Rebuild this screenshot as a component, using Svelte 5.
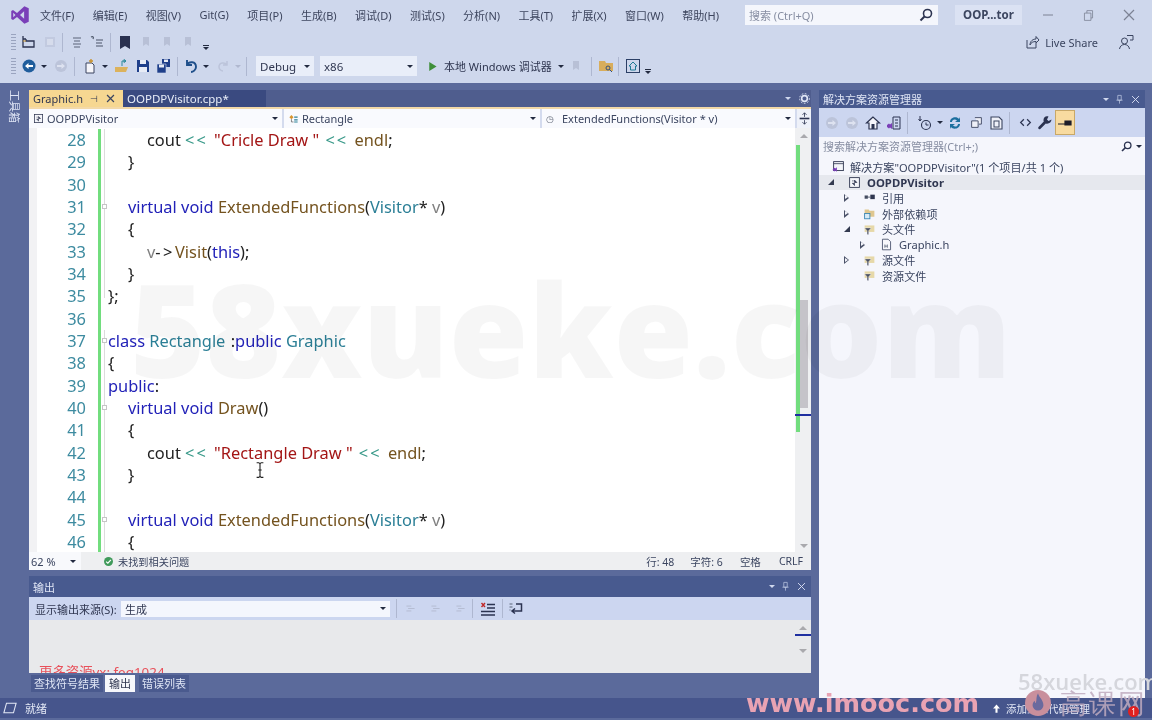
<script>
  const S = 'stroke-width="1.3" fill="none"';
  const icons = {
    vs: '<path d="M11.5 1 15 2.6v10.8L11.5 15 5.6 9.6 2.4 12 1 11.2V4.8L2.4 4l3.2 2.4zM2.6 6.2v3.6L4.4 8zM11.3 5 8 8l3.3 3z" fill="#7a3fb8"/>',
    sol: `<path d="M2 2v3h3M2 5v8h11V7H5V5" stroke="#2b3350" ${S}/><path d="M2 7h3" stroke="#c8932f" stroke-width="1"/>`,
    disA: '<rect x="3" y="3" width="10" height="10" fill="#c2cae0"/><rect x="5" y="5" width="6" height="6" fill="#d6dcec"/>',
    lines: '<path d="M4 4h8M5 7h6M4 10h8M5 13h6" stroke="#5a6478" stroke-width="1.2"/>',
    lines2: '<path d="M2 3c2-1 3 0 2 2M7 6h7M7 9h6M7 12h7" stroke="#4b5568" stroke-width="1.2" fill="none"/>',
    book: '<path d="M3 2h10v13l-5-3-5 3z" fill="#2a3150"/>',
    dbook: '<path d="M5 3h6v9l-3-2-3 2z" fill="#b8c0d6"/>',
    back: '<circle cx="8" cy="8" r="6.5" fill="#1f5d9c"/><path d="M4 8l3.5-3v2h4.5v2H7.5v2z" fill="#fff"/>',
    fwd: '<circle cx="8" cy="8" r="6" fill="#bcc4da"/><path d="M12 8 8.500 5v2H4v2h4.500v2z" fill="#dde2f0"/>',
    nw: '<path d="M4 5h6l2 2v8H4z" fill="#f5f5fa" stroke="#3b4560"/><path d="M9 1v4M7 3h4" stroke="#c8932f" stroke-width="1.4"/>',
    open: '<path d="M1 9h13l-2 5H1z" fill="#dcb25c"/><path d="M8 8V3h4M12 3l-2-1.500v3z" stroke="#2b8a9a" fill="none"/>',
    save: '<path d="M2 2h10l2 2v10H2z" fill="#1f3f8a"/><rect x="5" y="2" width="6" height="4" fill="#e8ecf6"/><rect x="4" y="9" width="8" height="5" fill="#e8ecf6"/>',
    saveall: '<path d="M6 1h8v8H6z" fill="#1f3f8a"/><path d="M1 6h9v9H1z" fill="#1f3f8a" stroke="#d0d8ec" stroke-width=".6"/><rect x="3" y="6.500" width="5" height="3" fill="#e8ecf6"/><rect x="8" y="1.500" width="4" height="2.500" fill="#e8ecf6"/>',
    undo: `<path d="M4 2v5h5M4 7c2-4 9-4 9 2 0 3-3 5-5 5" stroke="#1f4f8a" stroke-width="1.9" fill="none"/>`,
    redo: `<path d="M12 3v4H8M12 7c-2-3-8-3-8 2 0 2 2 4 4 4" stroke="#bcc4da" stroke-width="1.5" fill="none"/>`,
    play: '<path d="M4 2.500 13 8l-9 5.500z" fill="#3f8f3a"/>',
    fold: '<path d="M1 3h6l1 2h7v8H1z" fill="#d8ad5c"/><circle cx="10" cy="10" r="2" fill="none" stroke="#35507a"/><path d="M11.500 11.500 14 14" stroke="#35507a"/>',
    house: '<rect x="1.500" y="1.500" width="13" height="13" fill="none" stroke="#2b3f66"/><path d="M8 4 4 8h1.500v4h5V8H12z" fill="none" stroke="#1f7a96"/>',
    home: '<path d="M8 2 1.500 8H4v6h8V8h2.500z" fill="#f5f6fb" stroke="#2b3350" stroke-width="1.200"/><rect x="6.500" y="9" width="3" height="5" fill="#2b3350"/>',
    vsdoc: '<path d="M7 2h7v12H7z" fill="none" stroke="#2b3350"/><path d="M9 5h3M9 8h3M9 11h3" stroke="#2b3350"/><path d="M1 10l2-1.500 1 1 2-1.500v6l-2-1.500-1 1-2-1.500z" fill="#7a3fb8"/>',
    clock: '<circle cx="9" cy="10" r="4.500" fill="none" stroke="#2b3350" stroke-width="1.100"/><path d="M9 7.500V10h2.500" stroke="#2b3350" fill="none"/><path d="M3 1v5M1.500 4 3 6 4.500 4" stroke="#2b3350" fill="none"/>',
    sync: '<path d="M3 7c0-5 7-6 9-3l1-2v5H8l2-1.500C8 3.500 5 4.500 5 7zM13 9c0 5-7 6-9 3l-1 2V9h5l-2 1.500c2 2 5 1 5-1.500z" fill="#1c6f9e"/>',
    cop: '<path d="M6 2h8v8h-3M2 6h8v8H2z" fill="#eef0f8" stroke="#3b4560" stroke-width="1.100"/>',
    cop2: '<path d="M3 2h8l3 3v9H3z" fill="#eef0f8" stroke="#3b4560" stroke-width="1.100"/><rect x="6" y="6" width="5" height="6" fill="none" stroke="#3b4560"/>',
    code: '<path d="M6 4 2 8l4 4M10 4l4 4-4 4" fill="none" stroke="#2b3350" stroke-width="1.500"/>',
    wrench: '<path d="M14.500 4.500 11.500 6 10 4.500 11.500 1.500C9 .5 6.500 2 6.500 5c0 .5 0 1 .3 1.500L1.500 12c-1 1 .5 3 1.800 2l5.500-5.500c3 1 5.700-1.500 5.700-4z" fill="#2b3350"/>',
    pin: '<path d="M1 9h7M8 6h6v4H8z" stroke="#1e1e2a" fill="#1e1e2a" stroke-width="1.200"/>',
    search: '<circle cx="9.500" cy="6.500" r="4" fill="none" stroke="#2b3350" stroke-width="1.600"/><path d="M6.500 9.500 2.500 13.500" stroke="#2b3350" stroke-width="2"/>',
    soln: '<rect x="2" y="2" width="12" height="11" fill="#f4f5fa" stroke="#2f3650" stroke-width="1.100"/><path d="M2 4.500h12" stroke="#2f3650"/><path d="M1 11l2-1.500 1 1 2-1.500v5.500l-2-1.500-1 1-2-1.500z" fill="#7a3fb8"/>',
    proj: '<rect x="2" y="2" width="12" height="12" fill="#f4f5fa" stroke="#2f3650" stroke-width="1.100"/><path d="M5 9h3v3M8 5l3 3H8zM5 6h2" stroke="#2f3650" fill="#2f3650" stroke-width=".8"/>',
    cls: '<path d="M2 6l3-3 3 3-3 3z" fill="#d8952f"/><path d="M9 6h5M9 10h5M9 13h5" stroke="#2b7f96" stroke-width="1.500"/><path d="M5 9v4h3" stroke="#555" fill="none"/>',
    refs: '<rect x="2" y="5.500" width="4" height="4" fill="#444c60"/><rect x="9" y="4.500" width="5.500" height="5.500" fill="#2f3650"/><path d="M6 7.500h3" stroke="#444c60"/>',
    ext: '<path d="M2 3h5l1 1.500h6V12H2z" fill="#dfc78f"/><rect x="2" y="8" width="6.500" height="6.500" fill="#d7eaf6" stroke="#2b7fb0"/>',
    filt: '<path d="M2 3h12v8H2z" fill="#e6d8a8"/><path d="M2 6h8L7 9.500V14H5V9.500z" fill="#4a5060" stroke="#f5f6fc" stroke-width=".5"/>',
    file: '<path d="M3 1.500h7l3 3v10H3z" fill="#f8f8fc" stroke="#3b4560"/><path d="M6 8v4M9 8v4M6 10h3" stroke="#5a6478"/>',
    check: '<circle cx="8" cy="8" r="6.500" fill="#3f9a5a"/><path d="M4.500 8.200 7 10.500l4.500-5" stroke="#fff" stroke-width="1.700" fill="none"/>',
    clear: '<path d="M7 3.500h8M7 7h8M1 10.500h14M1 14h14" stroke="#2b3350" stroke-width="1.400"/><path d="M1.500 2l3.500 4M5 2 1.500 6" stroke="#c02828" stroke-width="1.400"/>',
    wrap: '<path d="M8 3h5.500v7H5M7 7.500 4 10l3 2.500" stroke="#2b3350" stroke-width="1.500" fill="none"/><path d="M1.500 3h3M1.500 6h3M1.500 9h1" stroke="#5a6478"/>',
    dline: '<path d="M3 5h6M5 8h8M3 11h6" stroke="#b4bcd2" stroke-width="1.200"/>',
    split: '<path d="M2 8h12" stroke="#2b3350" stroke-width="2"/><path d="M8 1v5M8 10v5M5.500 3.500 8 1l2.500 2.500M5.500 12.500 8 15l2.500-2.500" stroke="#2b3350" fill="none"/>',
    gear: '<circle cx="8" cy="8" r="3.500" fill="none" stroke="#dfe5f5" stroke-width="2"/><circle cx="8" cy="8" r="6" fill="none" stroke="#dfe5f5" stroke-width="1.200" stroke-dasharray="2 2"/>',
    wpin: '<path d="M5.500 2h5v7h-5zM3.500 9h9M8 9v5" stroke="#c5cfe8" fill="none"/>',
    wx: '<path d="M3 3l10 10M13 3 3 13" stroke="#d5dcf0" stroke-width="1.400"/>',
    tx: '<path d="M3 3l10 10M13 3 3 13" stroke="#7c8294" stroke-width="1.200"/>',
    tabx: '<path d="M3 3l10 10M13 3 3 13" stroke="#3b4560" stroke-width="1.800"/>',
    share: '<path d="M3 6v8h9V9" stroke="#3b4560" fill="none"/><path d="M6 11c0-4 3-6 6-6V2.500L15 6l-3 3V7.500c-3 0-5 1-6 3.500z" fill="none" stroke="#3b4560"/>',
    person: '<circle cx="6.500" cy="7" r="3" fill="none" stroke="#3b4560"/><path d="M1.500 15c.500-3 2.500-4.500 5-4.500s4.500 1.500 5 4.500M9 1.500h6V6h-3" fill="none" stroke="#3b4560"/>',
    minw: '<path d="M3 8h10" stroke="#7c8294"/>',
    rest: '<path d="M3 5h8v9H3zM6 5V2h7v9h-2" fill="none" stroke="#7c8294"/>',
    beam: '<path d="M5 1.500h2l1 1 1-1h2M5 14.500h2l1-1 1 1h2M8 2.500v11M6.500 8h3" fill="none" stroke="#222"/>',
    status: '<path d="M4 2.500h11L12 13.500H1z" fill="none" stroke="#e4e9f6" stroke-width="1.200"/>',
    up: '<path d="M8 2 3 8h3.500v6h3V8H13z" fill="#fff"/>'
  };

  const K = 'k', T = 't', F = 'f', R = 's', O = 'o', V = 'v', P = 'p', A = 'ar', C = 'cl';
  const rows = [
    { n: 28, fold: 'l', ind: 2, c: [[P, 'cout '], [O, '<< '], [R, '"Cricle Draw "'], [O, ' << '], [F, 'endl'], [P, ';']] },
    { n: 29, fold: 'l', ind: 1, c: [[P, '}']] },
    { n: 30, fold: 'l', ind: 0, c: [] },
    { n: 31, fold: 'b', ind: 1, c: [[K, 'virtual void '], [F, 'ExtendedFunctions'], [P, '('], [T, 'Visitor'], [P, '* '], [V, 'v'], [P, ')']] },
    { n: 32, fold: 'l', ind: 1, c: [[P, '{']] },
    { n: 33, fold: 'l', ind: 2, c: [[V, 'v'], [A, '->'], [F, 'Visit'], [P, '('], [K, 'this'], [P, ');']] },
    { n: 34, fold: 'l', ind: 1, c: [[P, '}']] },
    { n: 35, fold: 'e', ind: 0, c: [[P, '};']] },
    { n: 36, fold: '', ind: 0, c: [] },
    { n: 37, fold: 'b', ind: 0, c: [[K, 'class '], [T, 'Rectangle '], [C, ':'], [K, 'public '], [T, 'Graphic']] },
    { n: 38, fold: 'l', ind: 0, c: [[P, '{']] },
    { n: 39, fold: 'l', ind: 0, c: [[K, 'public'], [P, ':']] },
    { n: 40, fold: 'b', ind: 1, c: [[K, 'virtual void '], [F, 'Draw'], [P, '()']] },
    { n: 41, fold: 'l', ind: 1, c: [[P, '{']] },
    { n: 42, fold: 'l', ind: 2, c: [[P, 'cout '], [O, '<< '], [R, '"Rectangle Draw "'], [O, ' << '], [F, 'endl'], [P, ';']] },
    { n: 43, fold: 'l', ind: 1, c: [[P, '}']] },
    { n: 44, fold: 'l', ind: 0, c: [] },
    { n: 45, fold: 'b', ind: 1, c: [[K, 'virtual void '], [F, 'ExtendedFunctions'], [P, '('], [T, 'Visitor'], [P, '* '], [V, 'v'], [P, ')']] },
    { n: 46, fold: 'l', ind: 1, c: [[P, '{']] }
  ];
  const menu = ['文件(F)', '编辑(E)', '视图(V)', 'Git(G)', '项目(P)', '生成(B)', '调试(D)', '测试(S)', '分析(N)', '工具(T)', '扩展(X)', '窗口(W)', '帮助(H)'];
  const tree = [
    { cls: 'l0', ar: '', ic: 'soln', t: '解决方案"OOPDPVisitor"(1 个项目/共 1 个)' },
    { cls: 'l1 root', ar: 'open', ic: 'proj', t: 'OOPDPVisitor' },
    { cls: 'l2', ar: 'shut', ic: 'refs', t: '引用' },
    { cls: 'l2', ar: 'shut', ic: 'ext', t: '外部依赖项' },
    { cls: 'l2', ar: 'open', ic: 'filt', t: '头文件' },
    { cls: 'l3', ar: 'shut', ic: 'file', t: 'Graphic.h' },
    { cls: 'l2', ar: 'shut', ic: 'filt', t: '源文件' },
    { cls: 'l2', ar: '', ic: 'filt', t: '资源文件' }
  ];
</script>

{#snippet ic(name, cls = '')}
  <svg class="ic {cls}" viewBox="0 0 16 16" aria-hidden="true">{@html icons[name]}</svg>
{/snippet}
{#snippet dd(cls = '')}<span class="dd {cls}"></span>{/snippet}

<div class="page">
  <header class="chrome">
    <div class="menurow">
      <span class="logo">{@render ic('vs', 'big')}</span>
      <nav class="menu">
        {#each menu as m}<span>{m}</span>{/each}
      </nav>
      <div class="qsearch"><span>搜索 (Ctrl+Q)</span>{@render ic('search')}</div>
      <div class="sln">OOP...tor</div>
      <div class="win">{@render ic('minw')}{@render ic('rest', 'small')}{@render ic('tx')}</div>
    </div>
    <div class="tb one">
      <span class="grip"></span>
      <span class="c">{@render ic('sol')}</span>
      <span class="c m0">{@render ic('disA')}</span>
      <span class="sep s2"></span>
      <span class="c m3">{@render ic('lines')}</span>
      <span class="c">{@render ic('lines2')}</span>
      <span class="sep"></span>
      <span class="c m3">{@render ic('book')}</span>
      <span class="c m0">{@render ic('dbook')}</span>
      <span class="c m0">{@render ic('dbook')}</span>
      <span class="c m0">{@render ic('dbook')}</span>
      <span class="over o5"></span>
      <div class="live">{@render ic('share')}<span>Live Share</span>{@render ic('person', 'pers')}</div>
    </div>
    <div class="tb two">
      <span class="grip"></span>
      <span class="c">{@render ic('back')}</span>{@render dd('d')}
      <span class="c m1">{@render ic('fwd')}</span>
      <span class="sep"></span>
      <span class="c m4">{@render ic('nw')}</span>{@render dd('d')}
      <span class="c m1">{@render ic('open')}</span>
      <span class="c m0">{@render ic('save')}</span>
      <span class="c m0">{@render ic('saveall')}</span>
      <span class="sep"></span>
      <span class="c m2">{@render ic('undo')}</span>{@render dd('d')}
      <span class="c m1">{@render ic('redo')}</span>{@render dd('d dis')}
      <span class="sep"></span>
      <div class="combo debug"><span>Debug</span>{@render dd()}</div>
      <div class="combo x86"><span>x86</span>{@render dd()}</div>
      <span class="c m5">{@render ic('play', 'small')}</span>
      <span class="run">本地 Windows 调试器</span>{@render dd('d')}
      <span class="c">{@render ic('dbook')}</span>
      <span class="sep s5"></span>
      <span class="c m3">{@render ic('fold')}</span>
      <span class="sep s2"></span>
      <span class="c m3">{@render ic('house')}</span>
      <span class="over"></span>
    </div>
  </header>

  <main class="work">
    <aside class="toolbox"><span>工具箱</span></aside>

    <section class="center">
      <div class="tabs">
        <div class="tab on"><span>Graphic.h</span><i class="pn">⊣</i>{@render ic('tabx', 'tiny')}</div>
        <div class="tab off">OOPDPVisitor.cpp*</div>
        <div class="tabtools">{@render dd('w')}{@render ic('gear', 'small')}</div>
      </div>
      <div class="goldline"></div>
      <div class="nav">
        <div class="navc a">{@render ic('proj', 'tiny')}<span class="lbl">OOPDPVisitor</span>{@render dd()}</div>
        <div class="navc b">{@render ic('cls', 'tiny')}<span class="lbl">Rectangle</span>{@render dd()}</div>
        <div class="navc c3"><i class="clk">◷</i><span class="lbl">ExtendedFunctions(Visitor * v)</span>{@render dd()}</div>
        <div class="splitbtn">{@render ic('split', 'small')}</div>
      </div>
      <div class="editor">
        <div class="code">
          {#each rows as r}
            <div class="row">
              <span class="num">{r.n}</span>
              <span class="bar"></span>
              <span class="foldc {r.fold}"></span>
              <span class="src i{r.ind}">{#each r.c as tk}<span class={tk[0]}>{tk[1]}</span>{/each}</span>
            </div>
          {/each}
          {@render ic('beam', 'beam')}
        </div>
        <div class="scroll">
          <span class="up"></span>
          <span class="changes"></span>
          <span class="thumb"></span>
          <span class="mark"></span>
          <span class="down"></span>
        </div>
      </div>
      <div class="edstatus">
        <div class="zoom"><span>62 %</span>{@render dd()}</div>
        {@render ic('check', 'chk')}
        <span class="problems">未找到相关问题</span>
        <div class="pos"><span class="p1">行: 48</span><span class="p2">字符: 6</span><span class="p3">空格</span><span class="p4">CRLF</span></div>
      </div>

      <div class="output">
        <div class="otitle"><span>输出</span><div class="wt">{@render dd('w')}{@render ic('wpin', 'tiny')}{@render ic('wx', 'tiny')}</div></div>
        <div class="otools">
          <span class="olabel">显示输出来源(S):</span>
          <div class="ocombo"><span>生成</span>{@render dd()}</div>
          <span class="sep"></span>
          <span class="c g5">{@render ic('dline', 'small')}</span>
          <span class="c g9">{@render ic('dline', 'small')}</span>
          <span class="c g9">{@render ic('dline', 'small')}</span>
          <span class="sep s4"></span>
          <span class="c g7">{@render ic('clear')}</span>
          <span class="sep"></span>
          <span class="c g5">{@render ic('wrap')}</span>
        </div>
        <div class="obody">
          <span class="redmark">更多资源vx: feq1024</span>
          <div class="oscroll"><span class="up"></span><span class="mark"></span><span class="down"></span></div>
        </div>
        <div class="otabs">
          <span class="ot">查找符号结果</span>
          <span class="ot act">输出</span>
          <span class="ot">错误列表</span>
        </div>
      </div>
    </section>

    <aside class="side">
      <div class="stitle"><span>解决方案资源管理器</span><div class="wt">{@render dd('w')}{@render ic('wpin', 'tiny')}{@render ic('wx', 'tiny')}</div></div>
      <div class="stools">
        <span class="c">{@render ic('fwd')}</span>
        <span class="c">{@render ic('fwd')}</span>
        <span class="c m0">{@render ic('home')}</span>
        <span class="c m0">{@render ic('vsdoc')}</span>
        <span class="sep"></span>
        <span class="c g7">{@render ic('clock')}</span>{@render dd('d')}
        <span class="c">{@render ic('sync')}</span>
        <span class="c m0">{@render ic('cop', 'small')}</span>
        <span class="c">{@render ic('cop2')}</span>
        <span class="sep"></span>
        <span class="c m4">{@render ic('code', 'small')}</span>
        <span class="c">{@render ic('wrench')}</span>
        <span class="goldbtn">{@render ic('pin')}</span>
      </div>
      <div class="ssearch"><span class="lbl">搜索解决方案资源管理器(Ctrl+;)</span>{@render ic('search', 'small')}{@render dd()}</div>
      <div class="tree">
        {#each tree as n}
          <div class="node {n.cls}">
            <span class="arrow {n.ar}"></span>
            {@render ic(n.ic, 'tn')}
            <span>{n.t}</span>
          </div>
        {/each}
      </div>
    </aside>
  </main>

  <footer class="status">
    {@render ic('status', 'stic')}
    <span class="ready">就绪</span>
    <div class="stright">
      {@render ic('up', 'upi')}
      <span>添加到源代码管理</span>
    </div>
  </footer>

  <div class="wm big">58xueke.com</div>
  <div class="wm site">58xueke.com</div>
  <div class="wm imooc">www.imooc.com</div>
  <div class="wm gao">
    <svg class="flame" viewBox="0 0 24 24" aria-hidden="true"><circle cx="12" cy="12" r="12" fill="#c98f9c"/><path d="M12 3c1 4 5 6 5 11a5 5 0 0 1-10 0c0-2 1-3 2-4 0 2 1 2 1 2 1-3 0-6 2-9z" fill="#6a6a9e"/></svg>
    <span>高课网</span>
    <i class="reddot">1</i>
  </div>
</div>

<style>
  :global(body) { margin: 0; background: #cfd8ec; }
  .page {
    position: relative; width: 1152px; height: 720px; overflow: hidden;
    display: flex; flex-direction: column; background: #5b6a9b; filter: blur(.35px);
    font-family: "Noto Sans", "Noto Sans CJK SC", sans-serif; font-size: 11px; color: #2f3650;
  }
  .chrome { height: 83px; flex: none; background: #ced7ec; display: flex; flex-direction: column; }
  .menurow { height: 30px; display: flex; align-items: center; flex: none; }
  .logo { width: 40px; display: flex; justify-content: center; }
  .menu { display: flex; gap: 18.4px; width: 705px; white-space: nowrap; color: #3d455e; }
  .qsearch {
    width: 193px; height: 20px; background: #f4f6fc; display: flex; align-items: center;
    justify-content: space-between; padding: 0 4px; box-sizing: border-box; color: #878ea2; font-size: 11px;
  }
  .sln { margin-left: 17px; width: 67px; height: 20px; line-height: 20px; text-align: center; background: #dbe2f3; font-weight: 700; color: #3c4660; font-size: 11.5px; }
  .win { margin-left: 18px; display: flex; gap: 26px; align-items: center; }
  .ic { width: 16px; height: 16px; display: block; flex: none; }
  .ic.big { width: 20px; height: 20px; }
  .ic.small { width: 13px; height: 13px; }
  .ic.tiny { width: 11px; height: 11px; }
  .tb { display: flex; align-items: center; flex: none; }
  .one { height: 24px; }
  .two { height: 24px; }
  .grip { width: 5px; height: 17px; margin: 0 3px 0 11px; background: repeating-linear-gradient(#9aa4bf 0 1px, transparent 1px 3px); }
  .c { width: 20px; height: 20px; display: flex; align-items: center; justify-content: center; flex: none; }
  .m0 { margin-left: 1px; } .m1 { margin-left: 2px; } .m2 { margin-left: 3px; }
  .m3 { margin-left: 4px; } .m4 { margin-left: 5px; } .m5 { margin-left: 5px; }
  .sep { width: 1px; height: 19px; margin-left: 3px; background: #aeb7d0; flex: none; }
  .sep.s2 { margin-left: 2px; }
  .sep.s4 { margin-left: 4px; }
  .sep.s5 { margin-left: 5px; }
  .dd { width: 0; height: 0; border: 3px solid transparent; border-top: 3.5px solid #222a40; border-bottom: 0; flex: none; display: block; }
  .dd.d { margin: 0 2px; }
  .dd.dis { border-top-color: #b0b8cf; }
  .dd.w { border-top-color: #d0d8ee; }
  .over { width: 6px; height: 3px; border-top: 1px solid #222a40; margin: 10px 0 0 2px; position: relative; }
  .over.o5 { margin-left: 5px; }
  .over::after { content: ""; position: absolute; left: 0; top: 1px; border: 3px solid transparent; border-top: 3px solid #222a40; border-bottom: 0; }
  .live { margin-left: auto; display: flex; align-items: center; gap: 5px; padding-right: 18px; font-size: 11px; color: #3b4560; }
  .pers { margin-left: 15px; }
  .combo { height: 20px; background: #e9eef9; display: flex; align-items: center; justify-content: space-between; padding: 0 4px; box-sizing: border-box; font-size: 11.5px; margin-left: 6px; }
  .debug { width: 58px; margin-left: 9px; }
  .x86 { width: 97px; }
  .run { margin-left: 2px; margin-right: 2px; width: 110px; white-space: nowrap; }

  .work { flex: 1; display: flex; min-height: 0; padding-top: 7px; }
  .toolbox { width: 29px; flex: none; color: #dfe5f5; font-size: 11px; display: flex; justify-content: center; }
  .toolbox span { writing-mode: vertical-rl; text-orientation: sideways; height: 34px; }
  .center { width: 782px; flex: none; display: flex; flex-direction: column; }
  .tabs { height: 17px; display: flex; background: #4f5d8e; flex: none; color: #e8edf8; font-size: 11.5px; }
  .tab { height: 17px; display: flex; align-items: center; box-sizing: border-box; padding-left: 4px; white-space: nowrap; }
  .tab.on { width: 94px; background: #f6d791; color: #2f3650; gap: 7px; font-size: 11px; }
  .pn { font-style: normal; font-size: 9px; }
  .tab.off { width: 143px; background: #3a4a80; }
  .tabtools { margin-left: auto; display: flex; align-items: center; gap: 7px; }
  .goldline { height: 2px; background: #f3d9a8; flex: none; }
  .nav { height: 19px; display: flex; background: #d4dbee; flex: none; gap: 2px; font-size: 11px; }
  .navc { background: #f9fafe; display: flex; align-items: center; gap: 3px; padding: 0 4px; box-sizing: border-box; color: #3b4560; }
  .lbl { flex: 1; white-space: nowrap; }
  .a { width: 253px; } .b { width: 256px; } .c3 { width: 253px; }
  .clk { font-style: normal; color: #6b7280; font-size: 9px; margin-right: 5px; }
  .splitbtn { flex: 1; display: flex; align-items: center; justify-content: center; background: #eef1f9; }

  .editor { height: 424px; display: flex; background: #fff; flex: none; }
  .code { position: relative; flex: 1; overflow: hidden; padding-top: 1px; border-left: 8px solid #f2f2f4; box-sizing: border-box; font-size: 16.4px; }
  .row { display: grid; grid-template-columns: 49px 12px 3px 7px 1fr; height: 22.33px; line-height: 22.33px; }
  .num { text-align: right; color: #3d8ba0; grid-column: 1; }
  .bar { grid-column: 3; background: #72dd7e; }
  .foldc { grid-column: 4; position: relative; }
  .foldc.l::before, .foldc.b::before, .foldc.e::before { content: ""; position: absolute; left: 3px; top: 0; bottom: 0; width: 1px; background: #dcdcdc; }
  .foldc.e::before { bottom: 10px; }
  .foldc.b::after { content: ""; position: absolute; left: 1px; top: 8px; width: 5px; height: 5px; border: 1px solid #c5c5c5; background: #fff; box-sizing: border-box; }
  .src { white-space: pre; grid-column: 5; }
  .i1 { padding-left: 20px; } .i2 { padding-left: 39px; }
  .k { color: #2222b8; } .t { color: #2b7f96; } .f { color: #74531f; } .s { color: #a31515; }
  .o { color: #3a9a8a; letter-spacing: 2px; } .v { color: #808080; } .p { color: #222; }
  .ar { color: #222; letter-spacing: 2.5px; }
  .cl { color: #222; margin-left: 1px; }
  .ic.beam { position: absolute; left: 214px; top: 333px; width: 18px; height: 18px; }
  .scroll { width: 16px; flex: none; background: #eff0f2; position: relative; }
  .scroll .up { position: absolute; left: 5px; top: 6px; border: 4px solid transparent; border-bottom: 4px solid #a9a9ad; border-top: 0; }
  .scroll .down { position: absolute; left: 5px; bottom: 4px; border: 4px solid transparent; border-top: 4px solid #a9a9ad; border-bottom: 0; }
  .changes { position: absolute; left: 1px; top: 17px; width: 4px; height: 287px; background: #72dd7e; }
  .thumb { position: absolute; left: 5px; top: 172px; width: 8px; height: 108px; background: #c5c3c9; }
  .scroll .mark { position: absolute; left: 0; right: 0; top: 286px; height: 2px; background: #1f2fa0; }

  .edstatus { height: 18px; background: #eeeff1; display: flex; align-items: center; flex: none; position: relative; color: #3b4560; }
  .zoom { width: 52px; height: 18px; background: #f8f9fc; display: flex; align-items: center; justify-content: space-between; padding: 0 5px 0 2px; box-sizing: border-box; }
  .ic.chk { width: 11px; height: 11px; margin-left: 22px; margin-right: 4px; }
  .problems { font-size: 10.2px; }
  .pos { margin-left: auto; display: flex; padding-right: 8px; white-space: nowrap; font-size: 10.5px; }
  .p2 { margin-left: 16px; } .p3 { margin-left: 17px; } .p4 { margin-left: 18px; }

  .output { margin-top: 6px; flex: 1; display: flex; flex-direction: column; min-height: 0; }
  .otitle, .stitle { height: 21px; flex: none; background: #485a8f; color: #dfe5f5; display: flex; align-items: center; padding: 0 4px; box-sizing: border-box; font-size: 11px; justify-content: space-between; }
  .wt { display: flex; align-items: center; gap: 5px; }
  .otools { height: 23px; flex: none; background: #ccd6f0; display: flex; align-items: center; }
  .olabel { margin-left: 6px; width: 86px; white-space: nowrap; }
  .ocombo { width: 269px; height: 16px; background: #f4f6fd; display: flex; align-items: center; justify-content: space-between; padding: 0 4px; box-sizing: border-box; }
  .otools .sep { margin-left: 6px; }
  .otools .sep.s4 { margin-left: 4px; }
  .otools .c { width: 16px; }
  .g5 { margin-left: 5px; } .g7 { margin-left: 7px; } .g9 { margin-left: 9px; }
  .obody { height: 53px; flex: none; background: #e8e9eb; position: relative; overflow: hidden; }
  .redmark { position: absolute; left: 10px; top: 42px; color: #e8505a; font-size: 13.4px; line-height: 20px; white-space: nowrap; }
  .oscroll { position: absolute; right: 0; top: 0; bottom: 0; width: 16px; }
  .oscroll .up { position: absolute; left: 4px; top: 6px; border: 4px solid transparent; border-bottom: 4px solid #a9a9ad; border-top: 0; }
  .oscroll .down { position: absolute; left: 4px; bottom: 20px; border: 4px solid transparent; border-top: 4px solid #a9a9ad; border-bottom: 0; }
  .oscroll .mark { position: absolute; left: 0; right: 0; top: 14px; height: 2px; background: #1f2fa0; }
  .otabs { flex: none; display: flex; padding: 2px 0 0 2px; gap: 2px; color: #dfe5f5; }
  .ot { background: #4a5a8e; padding: 0 3px; line-height: 17px; white-space: nowrap; }
  .ot.act { background: #f6f7fb; color: #2f3650; margin-right: 2px; padding: 0 4px; }

  .side { width: 326px; margin-left: 8px; flex: none; background: #f5f6fc; display: flex; flex-direction: column; }
  .stitle { height: 18px; }
  .stools { height: 29px; flex: none; background: #ccd6f0; display: flex; align-items: center; padding-left: 3px; }
  .stools .sep { height: 22px; }
  .goldbtn { width: 18px; height: 23px; background: #f8dba0; border: 1px solid #c8a868; display: flex; align-items: center; justify-content: center; box-sizing: content-box; }
  .ssearch { height: 18px; flex: none; background: #f5f6fc; display: flex; align-items: center; padding: 0 3px 0 4px; color: #878ea2; gap: 3px; }
  .tree { flex: 1; padding-top: 4px; font-size: 11.1px; color: #3b4560; }
  .node { height: 15.6px; display: flex; align-items: center; white-space: nowrap; }
  .tn { width: 13px; height: 13px; margin-right: 6px; margin-left: 19px; }
  .arrow { width: 0; height: 0; display: block; flex: none; }
  .l0 { padding-left: 13px; }
  .l1 { padding-left: 9px; }
  .root { background: #e6e8ee; font-weight: 700; color: #2f3650; font-size: 11.3px; }
  .l2 { padding-left: 25px; }
  .l3 { padding-left: 41px; }
  .l0 .tn { margin-left: 0; margin-right: 5px; }
  .l1 .tn, .l3 .tn { margin-left: 20px; }
  .arrow.open { border-style: solid; border-width: 0 0 6px 6px; border-color: transparent transparent #333a50 transparent; margin-right: -6px; }
  .arrow.shut { border: 4px solid transparent; border-left: 5px solid #4a5168; border-right: 0; margin-right: -5px; position: relative; }
  .arrow.shut::after { content: ""; position: absolute; left: -4px; top: -2.5px; border: 2.5px solid transparent; border-left: 3px solid #f5f6fc; border-right: 0; }

  .status { height: 20px; margin-bottom: 2px; flex: none; background: #46558c; display: flex; align-items: center; color: #e4e9f6; position: relative; }
  .stic { margin: 0 8px 0 3px; width: 14px; height: 14px; }
  .stright { margin-left: auto; display: flex; align-items: center; gap: 4px; margin-right: 62px; white-space: nowrap; font-size: 10.5px; }
  .upi { width: 11px; height: 11px; }

  .wm { position: absolute; pointer-events: none; white-space: nowrap; font-family: "Open Sans", sans-serif; }
  .big { left: 130px; top: 238px; font-size: 129px; font-weight: 800; color: rgba(0, 0, 0, .035); line-height: 180px; }
  .site { left: 1018px; top: 666px; font-size: 22px; line-height: 30px; color: #d5d6dc; font-weight: 600; }
  .imooc { left: 746px; top: 687px; font-family: "DejaVu Sans", sans-serif; font-size: 25.5px; line-height: 32px; font-weight: 700; color: #e9a3b3; }
  .gao { left: 1025px; top: 688px; display: flex; align-items: center; color: rgba(190, 170, 190, .85); font-size: 27px; line-height: 30px; font-weight: 500; letter-spacing: 2px; }
  .flame { width: 26px; height: 26px; margin-right: 9px; }
  .reddot { position: absolute; right: 8px; bottom: 1px; width: 11px; height: 11px; border-radius: 50%; background: #e02020; color: #fff; font: 8px/11px "Noto Sans", sans-serif; text-align: center; letter-spacing: 0; }
</style>
